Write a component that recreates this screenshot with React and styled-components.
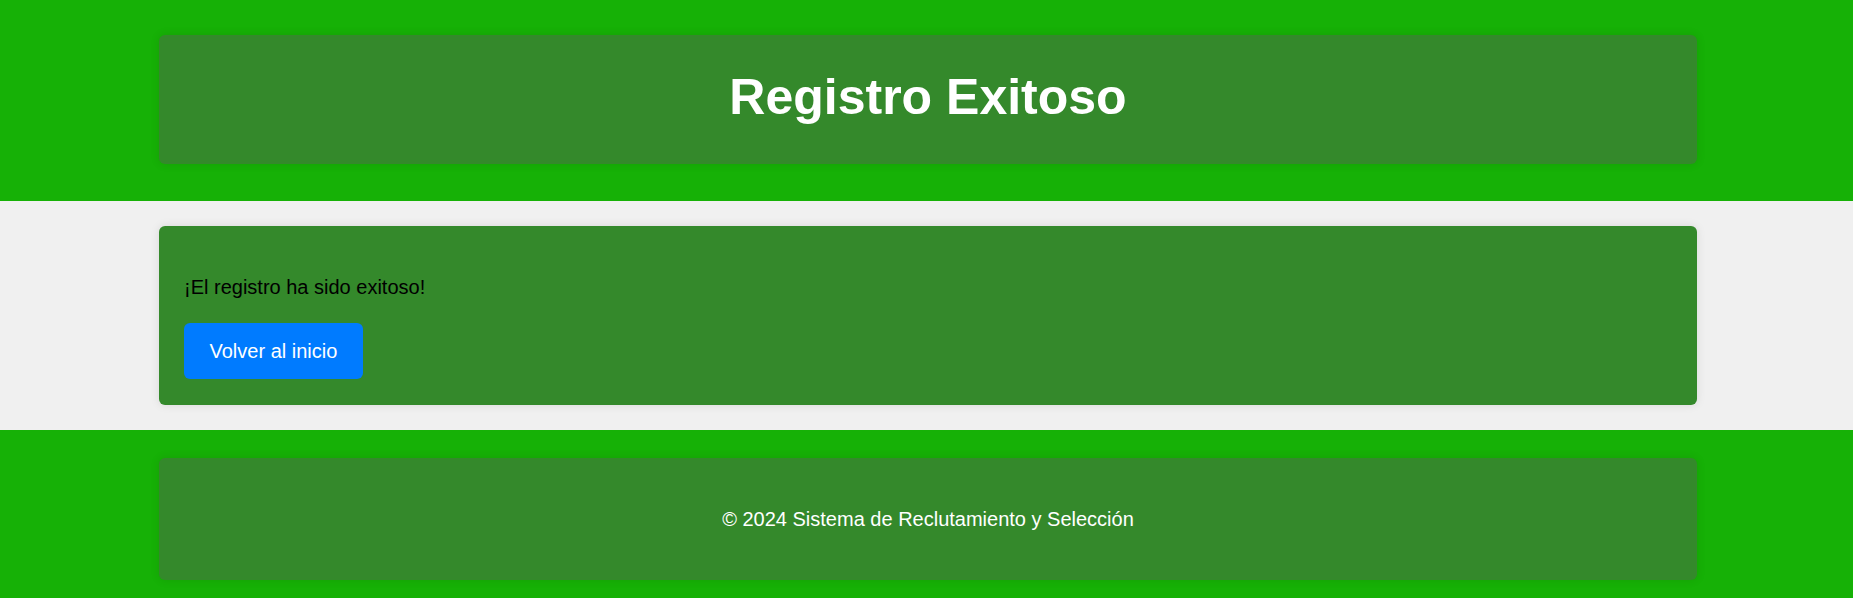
import React from "react";
import styled, { createGlobalStyle } from "styled-components";

const Global = createGlobalStyle`
  html, body { margin: 0; padding: 0; }
  body {
    background: #f0f0f0;
    font-family: "Liberation Sans", Arial, sans-serif;
    color: #000;
  }
`;

const Band = styled.div`
  background: ${(p) => (p.$green ? "#16b106" : "#f0f0f0")};
  padding: ${(p) => p.$pad};
  padding-left: 159px;
  padding-right: 156px;
`;

const Card = styled.div`
  background: #34892b;
  border-radius: 6px;
  box-shadow: 0 0 10px rgba(0, 0, 0, 0.1);
  padding: ${(p) => p.$pad};
  text-align: ${(p) => p.$align || "left"};
  display: flex;
  flex-direction: column;
  align-items: ${(p) => (p.$align === "center" ? "center" : "flex-start")};
`;

const Title = styled.h1`
  margin: 0;
  font-size: 50px;
  line-height: 57px;
  font-weight: 700;
  color: #fff;
`;

const Message = styled.p`
  margin: 25px 0 24px;
  font-size: 20px;
  line-height: 23px;
`;

const Button = styled.button`
  display: block;
  border: none;
  background: #007bff;
  color: #fff;
  font-family: "Liberation Sans", Arial, sans-serif;
  font-size: 20px;
  line-height: 23px;
  padding: 16.5px 25.5px;
  border-radius: 6px;
  cursor: pointer;
`;

const FooterText = styled.p`
  margin: 0;
  font-size: 20px;
  line-height: 23px;
  color: #fff;
`;

export default function App() {
  return (
    <>
      <Global />
      <Band $green $pad="35px 0 37px">
        <Card $pad="34px 25px 38px" $align="center">
          <Title>Registro Exitoso</Title>
        </Card>
      </Band>
      <Band $pad="25px 0 25px">
        <Card $pad="25px 25px 26px">
          <Message>¡El registro ha sido exitoso!</Message>
          <Button>Volver al inicio</Button>
        </Card>
      </Band>
      <Band $green $pad="28px 0 30px">
        <Card $pad="49.5px 25px" $align="center">
          <FooterText>© 2024 Sistema de Reclutamiento y Selección</FooterText>
        </Card>
      </Band>
    </>
  );
}
